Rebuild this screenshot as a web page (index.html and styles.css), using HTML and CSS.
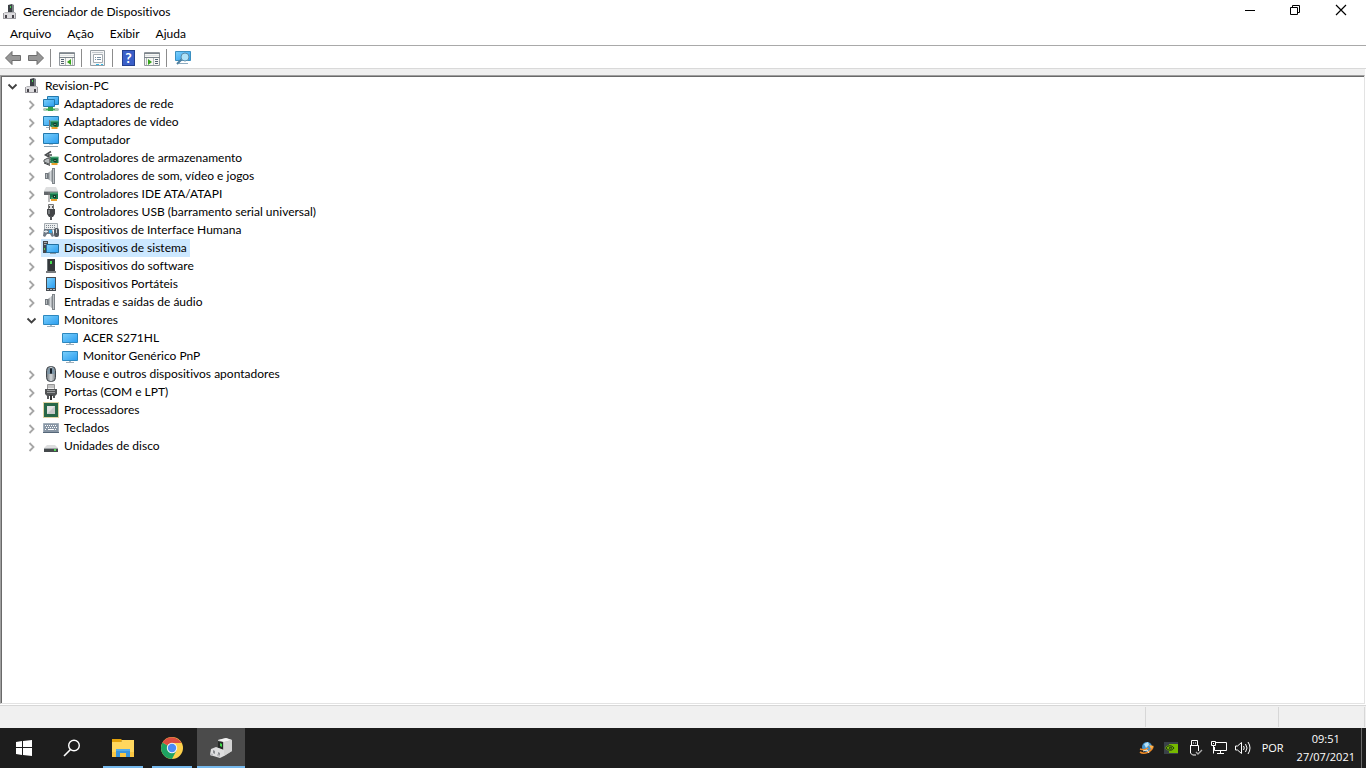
FILE: index.html
```html
<!DOCTYPE html>
<html lang="pt-br">
<head>
    <meta charset="UTF-8">
    <meta name="viewport" content="width=device-width, initial-scale=1.0">
    <title>Gerenciador de Dispositivos</title>
    <link rel="stylesheet" href="styles.css">
</head>
<body>
    <svg class="sprite" aria-hidden="true">
        <defs>
            <linearGradient id="azul" x1="0" y1="0" x2="1" y2="1">
                <stop offset="0" stop-color="#7cd0fb"/>
                <stop offset="1" stop-color="#2a9df0"/>
            </linearGradient>
            <linearGradient id="metal" x1="0" y1="0" x2="1" y2="0">
                <stop offset="0" stop-color="#6f757a"/>
                <stop offset=".5" stop-color="#d3d7da"/>
                <stop offset="1" stop-color="#777d82"/>
            </linearGradient>
        </defs>
        <symbol id="seta" viewBox="0 0 16 16">
            <path d="M5.500 5l4 4-4 4" fill="none" stroke="#a6a6a6" stroke-width="1.800"/>
        </symbol>
        <symbol id="seta-aberta" viewBox="0 0 16 16">
            <path d="M3.500 6.500l4 4 4-4" fill="none" stroke="#404040" stroke-width="1.800"/>
        </symbol>
        <symbol id="pc" viewBox="0 0 16 16">
            <path d="M6 1l4-1v9H6z" fill="#3b4045"/>
            <path d="M10 0l2 1v9h-2z" fill="#7c8186"/>
            <path d="M8 2h1v2H8z" fill="#48d654"/>
            <path d="M1 10l2-2h10l1 2z" fill="#b4b4b8"/>
            <path d="M1 9h13v6H1z" fill="#9b9a9f"/>
            <path d="M2 9h11v5H2z" fill="#dcdbde"/>
            <path d="M3 11h2v3H3zM10 11h2v3h-2z" fill="#46444a"/>
        </symbol>
        <symbol id="placa" viewBox="0 0 10 10">
            <path d="M1 0v10" stroke="#777" stroke-width="1"/>
            <path d="M2 1h8v6H2z" fill="#16774b"/>
            <path d="M2 1h8M3 6h3" stroke="#6bc391" stroke-width="1"/>
            <path d="M5 3h3v3H5z" fill="#173c2c"/>
            <path d="M6 4h1v1H6z" fill="#a7d8b9"/>
            <path d="M3 7h6v2H3z" fill="#e8a12b"/>
        </symbol>
        <symbol id="rede" viewBox="0 0 16 16">
            <path d="M4.500.5h11v8h-11z" fill="url(#azul)" stroke="#2479ad"/>
            <path d="M.5 3.500h11v7H.5z" fill="url(#azul)" stroke="#2479ad"/>
            <path d="M1 13.500h14" stroke="#43b15a" stroke-width="2"/>
            <path d="M5 11h5v4H5z" fill="#35a34d"/>
            <path d="M0 13.500h3M12 13.500h4" stroke="#b4bfb7" stroke-width="2"/>
        </symbol>
        <symbol id="video" viewBox="0 0 16 16">
            <path d="M.5 2.500h15v9H.5z" fill="url(#azul)" stroke="#2479ad"/>
            <path d="M3 13.500h4" stroke="#9aafbd"/>
            <use href="#placa" x="5" y="6" width="11" height="10"/>
        </symbol>
        <symbol id="computador" viewBox="0 0 16 16">
            <path d="M.5 1.500h15v10H.5z" fill="url(#azul)" stroke="#2479ad"/>
            <path d="M6 12h4v1H6z" fill="#b9c9d5"/>
            <path d="M1 14.500h14" stroke="#8ca0ae"/>
        </symbol>
        <symbol id="armazenamento" viewBox="0 0 16 16">
            <path d="M8 1.500L2.500 5 8 8M5 5h4" fill="none" stroke="#484b4d" stroke-width="1.600"/>
            <path d="M1 10l4-2 4 2-3 4-5-2z" fill="#b8bcbe" stroke="#505456"/>
            <path d="M1 13l5 2" stroke="#35383a"/>
            <use href="#placa" x="5" y="6" width="11" height="10"/>
        </symbol>
        <symbol id="som" viewBox="0 0 16 16">
            <path d="M2 5h4v6H2z" fill="#747a80"/>
            <path d="M3 6h1v4H3z" fill="#b8bdc0"/>
            <path d="M5 5l5-4v14l-5-4z" fill="url(#metal)"/>
            <path d="M9 0h3v16H9z" fill="#7f858a"/>
            <path d="M10.500 1v14" stroke="#bfc3c6"/>
        </symbol>
        <symbol id="ide" viewBox="0 0 16 16">
            <path d="M3 1h10l2 4H1z" fill="#dedfe0"/>
            <path d="M1 5h14v4H1z" fill="#63676b"/>
            <path d="M1 5.500h14" stroke="#aaaeb1"/>
            <use href="#placa" x="5" y="6" width="10" height="10"/>
        </symbol>
        <symbol id="usb" viewBox="0 0 16 16">
            <path d="M5.500.5h5v5h-5z" fill="#e1e1e1" stroke="#777"/>
            <path d="M6 2h1v2H6zM9 2h1v2H9z" fill="#555"/>
            <path d="M4 5h8v5l-2 3H6l-2-3z" fill="#434548"/>
            <path d="M5 6h2v4H5z" fill="#787b7e"/>
            <path d="M8 12v4" stroke="#515356" stroke-width="2"/>
        </symbol>
        <symbol id="humana" viewBox="0 0 16 16">
            <path d="M1.500 1.500h13v6h-13z" fill="#eceeef" stroke="#a4abb0"/>
            <path d="M3 3.500h10M3 5.500h10" stroke="#7d8790" stroke-dasharray="1 1"/>
            <path d="M1 7h8l2 7-2 1-2-3H4l-2 3-2-1z" fill="#6f7a86"/>
            <path d="M1 9.500h4M3 8v3" stroke="#e7edf1"/>
            <path d="M6 8h3v3H6z" fill="#38a5df"/>
            <rect x="11" y="6" width="5" height="9" rx="2" fill="#535960"/>
            <path d="M13.500 7v4" stroke="#c7cbce"/>
        </symbol>
        <symbol id="sistema" viewBox="0 0 16 16">
            <path d="M0 1h5v12H0z" fill="#45494d"/>
            <path d="M1 2.500h3M1 4.500h3" stroke="#a8adb1"/>
            <path d="M1 8h1v2H1z" fill="#54d55b"/>
            <path d="M3.500 4.500h12v8h-12z" fill="url(#azul)" stroke="#236f9f"/>
            <path d="M7 13.500h6" stroke="#8b9ba6"/>
        </symbol>
        <symbol id="software" viewBox="0 0 16 16">
            <path d="M4 1h8v12H4z" fill="#34383b"/>
            <path d="M4 1h1v12H4z" fill="#697074"/>
            <path d="M7 3h2v3H7z" fill="#47db50"/>
            <path d="M3 13h10v2H3z" fill="#777b7e"/>
        </symbol>
        <symbol id="portatil" viewBox="0 0 16 16">
            <path d="M3 1h10v14H3z" fill="#454b51"/>
            <path d="M4 2h8v10H4z" fill="url(#azul)"/>
            <path d="M4 13.500h8" stroke="#b9bec1" stroke-dasharray="2 1"/>
        </symbol>
        <symbol id="monitor" viewBox="0 0 16 16">
            <path d="M.5 3.500h15v9H.5z" fill="url(#azul)" stroke="#2d88bf"/>
            <path d="M4 14.500h8" stroke="#a0afba"/>
            <path d="M7 13h2v1H7z" fill="#a9bac6"/>
        </symbol>
        <symbol id="mouse" viewBox="0 0 16 16">
            <rect x="3.500" y=".5" width="9" height="15" rx="4" fill="url(#metal)" stroke="#40464c"/>
            <path d="M5 3l2-2v7H4M11 3L9 1v7h3" fill="#7d95a6"/>
            <rect x="7" y="2" width="2" height="6" rx="1" fill="#17202a"/>
        </symbol>
        <symbol id="porta" viewBox="0 0 16 16">
            <path d="M4.500.5h7v5h-7z" fill="#eeeeee" stroke="#969696"/>
            <path d="M6 1v3M8 1v3M10 1v3" stroke="#9a9a9a"/>
            <path d="M2 5h12v5l-2 2H4l-2-2z" fill="#515355"/>
            <path d="M4 6.500h8M4 8.500h8" stroke="#999c9e"/>
            <path d="M5 11v4M11 11v3" stroke="#555759" stroke-width="2"/>
            <path d="M8 11v5" stroke="#333" stroke-width="2"/>
        </symbol>
        <symbol id="processador" viewBox="0 0 16 16">
            <path d="M1 1h14v14H1z" fill="#286748"/>
            <path d="M.5.5h15v15H.5z" fill="none" stroke="#c3a94a" stroke-dasharray="1 1"/>
            <path d="M4 4h8v8H4z" fill="#e1e2e2"/>
            <path d="M4 12l8-8v8z" fill="#c6c8c9"/>
        </symbol>
        <symbol id="teclado" viewBox="0 0 16 16">
            <path d="M.5 3.500h15v9H.5z" fill="#8795a4" stroke="#a3afba"/>
            <path d="M2 5.500h12M3 7.500h11M2 9.500h2M12 9.500h2" stroke="#fff" stroke-dasharray="1 1"/>
            <path d="M5 9.500h6" stroke="#fff"/>
            <path d="M0 12.500h16" stroke="#556779"/>
        </symbol>
        <symbol id="disco" viewBox="0 0 16 16">
            <path d="M4 7h8l3 3H1z" fill="#dddedf"/>
            <path d="M1 10h14v4H1z" fill="#45494c"/>
            <path d="M1 10.500h14" stroke="#9fa3a6"/>
            <path d="M11 11h2v2h-2z" fill="#50dc54"/>
        </symbol>
    </svg>

    <header class="titulo">
        <svg><use href="#pc"/></svg>
        <h1>Gerenciador de Dispositivos</h1>
        <div class="controles">
            <button type="button" aria-label="Minimizar">
                <svg viewBox="0 0 12 12"><path d="M2 6.500h10" stroke="#000"/></svg>
            </button>
            <button type="button" aria-label="Restaurar">
                <svg viewBox="0 0 12 12"><path d="M1.500 3.500h7v7h-7zM3.500 3V1.500h7v7H9" fill="none" stroke="#000"/></svg>
            </button>
            <button type="button" aria-label="Fechar">
                <svg viewBox="0 0 12 12"><path d="M1 1l10 10M11 1L1 11" stroke="#000" stroke-width="1.200"/></svg>
            </button>
        </div>
    </header>

    <nav class="menu">
        <button type="button">Arquivo</button>
        <button type="button">Ação</button>
        <button type="button">Exibir</button>
        <button type="button">Ajuda</button>
    </nav>

    <div class="ferramentas">
        <div class="grupo">
            <button type="button" aria-label="Voltar">
                <svg viewBox="0 0 18 18"><path d="M1.500 9L8 2.500v4h8.500v5H8v4z" fill="#979797" stroke="#6d6d6d"/></svg>
            </button>
            <button type="button" aria-label="Avançar">
                <svg viewBox="0 0 18 18"><path d="M16.500 9L10 2.500v4H1.500v5H10v4z" fill="#979797" stroke="#6d6d6d"/></svg>
            </button>
        </div>
        <div class="grupo">
            <button type="button" aria-label="Mostrar árvore de console">
                <svg viewBox="0 0 18 18">
                    <path d="M1.500 3.500h15v13h-15z" fill="#f7f7f4" stroke="#92989d"/>
                    <path d="M1 4.500h16M1 8.500h16" stroke="#7d858c"/>
                    <path d="M2 6.500h14" stroke="#dfe3e6"/>
                    <path d="M7.500 9v7M14.500 9v7" stroke="#b4babd"/>
                    <path d="M3 10.500h3M3 12.500h3M3 14.500h3" stroke="#51616f"/>
                    <path d="M13 10v6l-4-3z" fill="#36a51b"/>
                </svg>
            </button>
        </div>
        <div class="grupo">
            <button type="button" aria-label="Propriedades">
                <svg viewBox="0 0 18 18">
                    <path d="M1.500 1.500h14v15h-14z" fill="#f4f5f6" stroke="#969da3"/>
                    <path d="M3 3.500h11" stroke="#c3c8cc"/>
                    <path d="M4.500 5.500h9v8h-9z" fill="#fff" stroke="#a4abb0"/>
                    <path d="M6 8.500h1M8 8.500h4M6 10.500h1M8 10.500h4" stroke="#7890a3"/>
                    <path d="M7 15.500h3M12 15.500h2" stroke="#34b9e7"/>
                </svg>
            </button>
        </div>
        <div class="grupo">
            <button type="button" aria-label="Ajuda" class="ajuda">?</button>
            <button type="button" aria-label="Mostrar painel de ações">
                <svg viewBox="0 0 18 18">
                    <path d="M1.500 3.500h15v13h-15z" fill="#f7f7f4" stroke="#92989d"/>
                    <path d="M1 4.500h16M1 8.500h16" stroke="#7d858c"/>
                    <path d="M2 6.500h14" stroke="#dfe3e6"/>
                    <path d="M3.500 9v7M10.500 9v7" stroke="#b4babd"/>
                    <path d="M12 10.500h3M12 12.500h3M12 14.500h3" stroke="#51616f"/>
                    <path d="M5 10v6l4-3z" fill="#36a51b"/>
                </svg>
            </button>
        </div>
        <div class="grupo">
            <button type="button" aria-label="Verificar alterações de hardware">
                <svg viewBox="0 0 18 18">
                    <path d="M1.500 2.500h15v9h-15z" fill="url(#azul)" stroke="#3a8fc0"/>
                    <path d="M5 14.500h9" stroke="#8eabc0"/>
                    <path d="M8 10l-5 5" stroke="#4d7f9f" stroke-width="2"/>
                    <circle cx="11" cy="8" r="4" fill="#afe2f8" stroke="#5c8dab"/>
                </svg>
            </button>
        </div>
    </div>

    <main class="arvore">
        <ul>
            <li>
                <div class="linha"><button type="button" aria-label="Recolher"><svg><use href="#seta-aberta"/></svg></button><a href="#"><svg><use href="#pc"/></svg>Revision-PC</a></div>
                <ul>
                    <li class="linha"><button type="button" aria-label="Expandir"><svg><use href="#seta"/></svg></button><a href="#"><svg><use href="#rede"/></svg>Adaptadores de rede</a></li>
                    <li class="linha"><button type="button" aria-label="Expandir"><svg><use href="#seta"/></svg></button><a href="#"><svg><use href="#video"/></svg>Adaptadores de vídeo</a></li>
                    <li class="linha"><button type="button" aria-label="Expandir"><svg><use href="#seta"/></svg></button><a href="#"><svg><use href="#computador"/></svg>Computador</a></li>
                    <li class="linha"><button type="button" aria-label="Expandir"><svg><use href="#seta"/></svg></button><a href="#"><svg><use href="#armazenamento"/></svg>Controladores de armazenamento</a></li>
                    <li class="linha"><button type="button" aria-label="Expandir"><svg><use href="#seta"/></svg></button><a href="#"><svg><use href="#som"/></svg>Controladores de som, vídeo e jogos</a></li>
                    <li class="linha"><button type="button" aria-label="Expandir"><svg><use href="#seta"/></svg></button><a href="#"><svg><use href="#ide"/></svg>Controladores IDE ATA/ATAPI</a></li>
                    <li class="linha"><button type="button" aria-label="Expandir"><svg><use href="#seta"/></svg></button><a href="#"><svg><use href="#usb"/></svg>Controladores USB (barramento serial universal)</a></li>
                    <li class="linha"><button type="button" aria-label="Expandir"><svg><use href="#seta"/></svg></button><a href="#"><svg><use href="#humana"/></svg>Dispositivos de Interface Humana</a></li>
                    <li class="linha"><button type="button" aria-label="Expandir"><svg><use href="#seta"/></svg></button><a href="#" class="selecionado"><svg><use href="#sistema"/></svg>Dispositivos de sistema</a></li>
                    <li class="linha"><button type="button" aria-label="Expandir"><svg><use href="#seta"/></svg></button><a href="#"><svg><use href="#software"/></svg>Dispositivos do software</a></li>
                    <li class="linha"><button type="button" aria-label="Expandir"><svg><use href="#seta"/></svg></button><a href="#"><svg><use href="#portatil"/></svg>Dispositivos Portáteis</a></li>
                    <li class="linha"><button type="button" aria-label="Expandir"><svg><use href="#seta"/></svg></button><a href="#"><svg><use href="#som"/></svg>Entradas e saídas de áudio</a></li>
                    <li>
                        <div class="linha"><button type="button" aria-label="Recolher"><svg><use href="#seta-aberta"/></svg></button><a href="#"><svg><use href="#monitor"/></svg>Monitores</a></div>
                        <ul class="folhas">
                            <li class="linha"><a href="#"><svg><use href="#monitor"/></svg>ACER S271HL</a></li>
                            <li class="linha"><a href="#"><svg><use href="#monitor"/></svg>Monitor Genérico PnP</a></li>
                        </ul>
                    </li>
                    <li class="linha"><button type="button" aria-label="Expandir"><svg><use href="#seta"/></svg></button><a href="#"><svg><use href="#mouse"/></svg>Mouse e outros dispositivos apontadores</a></li>
                    <li class="linha"><button type="button" aria-label="Expandir"><svg><use href="#seta"/></svg></button><a href="#"><svg><use href="#porta"/></svg>Portas (COM e LPT)</a></li>
                    <li class="linha"><button type="button" aria-label="Expandir"><svg><use href="#seta"/></svg></button><a href="#"><svg><use href="#processador"/></svg>Processadores</a></li>
                    <li class="linha"><button type="button" aria-label="Expandir"><svg><use href="#seta"/></svg></button><a href="#"><svg><use href="#teclado"/></svg>Teclados</a></li>
                    <li class="linha"><button type="button" aria-label="Expandir"><svg><use href="#seta"/></svg></button><a href="#"><svg><use href="#disco"/></svg>Unidades de disco</a></li>
                </ul>
            </li>
        </ul>
    </main>

    <div class="status">
        <span></span>
        <span></span>
    </div>

    <footer class="tarefas">
        <div class="apps">
            <button type="button" aria-label="Iniciar">
                <svg viewBox="0 0 24 24"><path d="M4 6l6-1v6H4zM11 5l9-1v7h-9zM4 12h6v7l-6-1zM11 12h9v8l-9-1z" fill="#fff"/></svg>
            </button>
            <button type="button" aria-label="Pesquisar">
                <svg viewBox="0 0 24 24"><circle cx="14" cy="9.500" r="5.300" fill="none" stroke="#fff" stroke-width="1.400"/><path d="M10.500 13.500L4 20" stroke="#fff" stroke-width="1.600"/></svg>
            </button>
            <div class="abertos">
                <button type="button" aria-label="Explorador de Arquivos">
                    <svg viewBox="0 0 24 24">
                        <path d="M1 3h9l2 2h-2v3H1z" fill="#e3a20b"/>
                        <path d="M1 6h9l1-2h12v17H1z" fill="#ffd75e"/>
                        <path d="M1 16h22v5H1z" fill="#fbc742"/>
                        <path d="M5 13h14v8h-4v-4H9v4H5z" fill="#3a95dc"/>
                        <path d="M5 13h14v2H5z" fill="#55ace8"/>
                    </svg>
                </button>
                <button type="button" aria-label="Google Chrome">
                    <svg viewBox="0 0 24 24">
                        <circle cx="12" cy="12" r="11" fill="#fdd04b"/>
                        <path d="M12 12L2.500 6.500A11 11 0 0 0 12 23l4.500-8.500z" fill="#1ea362"/>
                        <path d="M12 12L2.500 6.500A11 11 0 0 1 21.500 7H12z" fill="#dc4e41"/>
                        <circle cx="12" cy="12" r="5.200" fill="#f5f5f5"/>
                        <circle cx="12" cy="12" r="4.200" fill="#4c8bf5"/>
                    </svg>
                </button>
                <button type="button" class="ativo" aria-label="Gerenciador de Dispositivos">
                    <svg viewBox="0 0 24 24">
                        <path d="M9 4l8-2 6 2v11l-8 5-6-4z" fill="#b9b9b9"/>
                        <path d="M9 4l8-2 6 2-8 2z" fill="#f2f2f2"/>
                        <path d="M15 6l8-2v11l-8 5z" fill="#d3d3d3"/>
                        <path d="M9 5l5 1v8l-5-2z" fill="#272b28"/>
                        <path d="M11 7l2 1v3l-2-1z" fill="#3edb49"/>
                        <path d="M2 13l5-2 8 3v6l-4 2-10-3z" fill="#dededf"/>
                        <path d="M4 14l2 1v3l-2-1zM9 16l2 1v3l-2-1z" fill="#8a8c90"/>
                        <path d="M1 17l3 1v2l-3-1zM8 18l3 1v2l-3-1z" fill="#b9b9bc"/>
                    </svg>
                </button>
            </div>
        </div>
        <div class="bandeja">
            <button type="button" aria-label="Atualizador">
                <svg viewBox="0 0 16 16">
                    <circle cx="8" cy="7" r="5" fill="#4495d0"/>
                    <path d="M5 4l4-2 1 3-3 3z" fill="#b6e2f7"/>
                    <path d="M1 12c4 3 11 0 13-5M1 9c3 1 6 1 8-1" fill="none" stroke="#ef8a25" stroke-width="1.600"/>
                    <path d="M10 5l5 1-3 3z" fill="#ffb14a"/>
                    <path d="M4 11l4-1 2 3" fill="none" stroke="#fff1d4"/>
                </svg>
            </button>
            <button type="button" aria-label="NVIDIA">
                <svg viewBox="0 0 16 16">
                    <path d="M1 2h14v12H1z" fill="#3a4148"/>
                    <path d="M6 4h9v9H6z" fill="#76b900"/>
                    <path d="M2 8c2-4 7-4 10 0-3 4-7 4-10 0z" fill="#76b900"/>
                    <path d="M3 8c2-3 6-3 8 0-2 3-5 3-8 0zM6 8c1-1 3-1 3 0s-2 2-3 0z" fill="none" stroke="#203616"/>
                </svg>
            </button>
            <button type="button" aria-label="Remover Hardware com Segurança">
                <svg viewBox="0 0 16 16">
                    <path d="M4.500 5V.5h6V5M3.500 5.500h8V11M3.500 5v8l2 2H9M6 3h1M8 3h1" fill="none" stroke="#fff"/>
                    <path d="M9 12l2 2 4-4" fill="none" stroke="#aaa" stroke-width="1.400"/>
                </svg>
            </button>
            <button type="button" aria-label="Rede">
                <svg viewBox="0 0 16 16"><path d="M5 2.500h10.500v8h-12V7M.5 1.500h4v4h-4zM2.500 5.500v8M6 13.500h7M9.500 11v3M2 3.500h1" fill="none" stroke="#fff"/></svg>
            </button>
            <button type="button" aria-label="Alto-falantes">
                <svg viewBox="0 0 16 16"><path d="M.5 6h2L6.500 2.500v11L2.500 10h-2zM8.500 6q1.500 2 0 4M10.500 4q3 4 0 8M13 2q4 6 0 12" fill="none" stroke="#fff"/></svg>
            </button>
            <button type="button" class="idioma">POR</button>
            <button type="button" class="relogio"><span>09:51</span><span>27/07/2021</span></button>
        </div>
    </footer>
</body>
</html>
```
FILE: styles.css
```css
*{
    margin: 0;
    padding: 0;
    box-sizing: border-box;
}

body{
    display: flex;
    flex-direction: column;
    min-height: 100vh;
    background-color: #fff;
    color: #000;
    font-family: Lato, "Open Sans", sans-serif;
    font-size: 12px;
    font-variant-ligatures: none;
    line-height: 18px;
}

button {
    border: none;
    background-color: transparent;
    color: inherit;
    font: inherit;
}

a {
    color: inherit;
    text-decoration: none;
}

ul {
    list-style: none;
}

svg {
    display: block;
    flex-shrink: 0;
    width: 16px;
    height: 16px;
}

.sprite {
    position: absolute;
    width: 0;
    height: 0;
}

.titulo {
    display: flex;
    align-items: center;
    gap: 5px;
    height: 24px;
    padding-left: 2px;
}

.titulo h1 {
    font-size: 12px;
    font-weight: normal;
}

.controles {
    display: flex;
    align-self: flex-start;
    margin-left: auto;
}

.controles button {
    display: flex;
    align-items: center;
    justify-content: center;
    width: 46px;
    height: 20px;
    padding-right: 4px;
}

.controles svg {
    width: 12px;
    height: 12px;
}

.menu {
    display: flex;
    height: 22px;
    padding-left: 2px;
    border-bottom: 1px solid #a9a9a9;
}

.menu button {
    padding: 0 8px 2px;
}

.ferramentas {
    display: flex;
    align-items: center;
    height: 23px;
    padding: 3px 4px 1px;
    border-bottom: 1px solid #d9d9d9;
}

.grupo {
    display: flex;
    gap: 5px;
}

.grupo + .grupo {
    margin-left: 5px;
    padding-left: 7px;
    border-left: 1px solid #8c8c8c;
}

.ferramentas svg {
    width: 18px;
    height: 18px;
}

.ferramentas .ajuda {
    width: 13px;
    height: 16px;
    margin: 1px 3px 1px 2px;
    border: 1px solid #24408e;
    background-color: #3a5fc8;
    color: #fff;
    font-size: 14px;
    font-weight: bold;
    line-height: 14px;
}

.arvore {
    flex: 1;
    margin: 6px 1px 0 0;
    padding: 1px;
    border: 1px solid #e3e3e3;
    border-top-color: #a0a0a0;
    border-left-color: #a0a0a0;
    box-shadow: inset 1px 1px #696969, 0 -6px #f0f0f0;
}

.arvore > ul {
    padding-left: 1px;
}

.arvore ul ul {
    padding-left: 19px;
}

.arvore .folhas {
    padding-left: 38px;
}

.linha {
    display: flex;
    height: 18px;
}

.linha button {
    display: flex;
    align-items: center;
    justify-content: center;
    width: 19px;
}

.linha a {
    display: flex;
    align-items: center;
    gap: 5px;
    padding: 0 3px 0 2px;
    white-space: nowrap;
}

.linha .selecionado {
    background-color: #cce8ff;
}

.status {
    display: flex;
    justify-content: flex-end;
    height: 23px;
    margin-top: 1px;
    padding: 1px;
    border-top: 1px solid #d7d7d7;
    background-color: #f0f0f0;
}

.status span {
    width: 133px;
    border-left: 1px solid #d7d7d7;
}

.status span + span {
    width: 87px;
    border-right: 1px solid #d7d7d7;
}

.tarefas {
    display: flex;
    justify-content: space-between;
    height: 40px;
    background-color: #1d1d1d;
    color: #fff;
}

.apps {
    display: flex;
}

.apps button {
    display: flex;
    align-items: center;
    justify-content: center;
    width: 48px;
}

.apps svg {
    width: 24px;
    height: 24px;
}

.abertos {
    display: flex;
    gap: 1px;
    margin-left: 3px;
}

.abertos button {
    background: linear-gradient(#76b9ed, #76b9ed) bottom / 40px 2px no-repeat;
}

.abertos .ativo {
    background-color: #4b4b4b;
    background-size: 48px 2px;
}

.bandeja {
    display: flex;
    align-items: center;
    margin-right: 4px;
    border-right: 1px solid #6a6a6a;
    font-family: "Open Sans", sans-serif;
    font-size: 11px;
}

.bandeja button {
    padding: 0 4px;
}

.bandeja .idioma {
    padding: 0 7px;
}

.bandeja .relogio {
    display: flex;
    flex-direction: column;
    align-items: center;
    padding: 0 6px;
}
```
